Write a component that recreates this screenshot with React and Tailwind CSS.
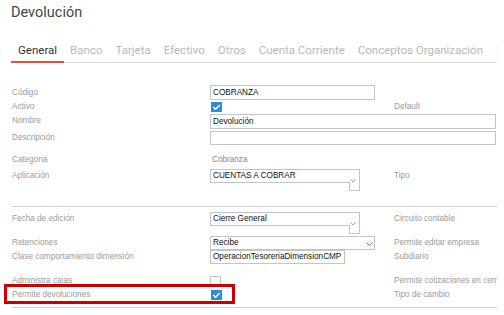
import React from "react";

const LBL = "text-[8.2px] text-[#9a9a9a] leading-[12px] whitespace-nowrap";
const TXT = "text-[8.2px] text-[#111] leading-[12px] whitespace-nowrap";

function Check({ checked }) {
  if (!checked) {
    return <div className="w-[11px] h-[11px] border border-[#c4c4c4] bg-white" />;
  }
  return (
    <svg width="11" height="10" viewBox="0 0 11 10" className="ml-[1px] block">
      <rect x="0" y="0" width="11" height="10" fill="#2b8fd6" />
      <polyline points="2.3,5 4.5,7.2 8.8,3" fill="none" stroke="#fff" strokeWidth="1.5" />
    </svg>
  );
}

function Chevron({ className, w = 6, h = 3, color = "#7fb0e0" }) {
  return (
    <svg width={w} height={h + 1} viewBox={`0 0 ${w} ${h + 1}`} className={className}>
      <polyline points={`0.5,0.5 ${w / 2},${h} ${w - 0.5},0.5`} fill="none" stroke={color} strokeWidth="1" />
    </svg>
  );
}

function OddSelect({ value }) {
  return (
    <div className="relative w-[150px] h-[22px]">
      <div className={`h-[14px] border border-[#c4c4c4] pl-[2px] flex items-center ${TXT}`}>{value}</div>
      <div className="absolute right-0 top-[13px] w-[11px] h-[9px] border-x border-b border-[#c4c4c4] bg-white" />
      <Chevron className="absolute left-[140px] top-[10px]" />
    </div>
  );
}

function Row({ label, children, right, h = "h-[14px]", items = "items-center", fieldW = "w-[184px]", lblExtra = "" }) {
  return (
    <div className={`flex ${items} ${h}`}>
      <div className={`w-[198px] shrink-0 ${LBL} ${lblExtra}`}>{label}</div>
      <div className={`${fieldW} shrink-0 flex ${items}`}>{children}</div>
      {right && <div className={`shrink-0 ${LBL} ${lblExtra}`}>{right}</div>}
    </div>
  );
}

export default function App() {
  const tabs = [
    "General",
    "Banco",
    "Tarjeta",
    "Efectivo",
    "Otros",
    "Cuenta Corriente",
    "Conceptos Organización",
    "Impuestos",
  ];
  return (
    <div className="w-[504px] h-[315px] bg-white relative font-['Liberation_Sans',Arial,sans-serif]">
      <div className="w-[497px] h-[315px] overflow-hidden">
        <div className="pl-[11px] pt-[4px] font-['Roboto',sans-serif] text-[14.5px] leading-[17px] text-[#444]">
          Devolución
        </div>

        <div className="relative ml-[11px] mt-[19px] w-[486px] h-[23px] overflow-hidden">
          <div className="absolute left-0 right-0 bottom-0 h-px bg-[#dcdcdc]" />
          <div className="relative flex font-['Roboto',sans-serif] text-[11.5px] whitespace-nowrap">
            {tabs.map((t, i) => (
              <div
                key={t}
                className={
                  i === 0
                    ? "shrink-0 h-[23px] pl-[7px] pr-[6.5px] flex items-center text-[#333] border-b-2 border-[#e8503a]"
                    : "shrink-0 h-[22px] px-[6.5px] flex items-center text-[#b8b8b8]"
                }
              >
                {t}
              </div>
            ))}
          </div>
        </div>

        <div className="pl-[12px] pt-[22px]">
          <Row label="Código" h="h-[15px]">
            <div className={`w-[165px] h-[15px] border border-[#c4c4c4] pl-[2px] flex items-center ${TXT}`}>COBRANZA</div>
          </Row>
          <Row label="Activo" right="Default">
            <Check checked />
          </Row>
          <Row label="Nombre" h="h-[16px]" items="items-start" fieldW="w-[286px]" lblExtra="pt-[1px]">
            <div className={`w-[286px] h-[15px] border border-[#c4c4c4] pl-[2px] flex items-center ${TXT}`}>Devolución</div>
          </Row>
          <Row label="Descripción" h="h-[15px]" fieldW="w-[286px]">
            <div className="w-[286px] h-[14px] border border-[#c4c4c4]" />
          </Row>

          <div className="mt-[8px]">
            <Row label="Categoria">
              <div className="pl-[2px] text-[8.2px] leading-[12px] text-[#888]">Cobranza</div>
            </Row>
          </div>
          <div className="mt-[2px]">
            <Row label="Aplicación" right="Tipo" h="h-[22px]" items="items-start" lblExtra="pt-[1px]">
              <OddSelect value="CUENTAS A COBRAR" />
            </Row>
          </div>

          <div className="mt-[15px] w-[485px] h-px bg-[#cfcfcf]" />

          <div className="mt-[5px]">
            <Row label="Fecha de edición" right="Circuito contable" h="h-[22px]" items="items-start" lblExtra="pt-[1px]">
              <OddSelect value="Cierre General" />
            </Row>
          </div>
          <div className="mt-[2px]">
            <Row label="Retenciones" right="Permite editar empresa">
              <div className={`relative w-[165px] h-[14px] border border-[#c4c4c4] pl-[2px] flex items-center ${TXT}`}>
                Recibe
                <Chevron className="absolute left-[155px] top-[5px]" w={7} h={3.5} color="#4a90d9" />
              </div>
            </Row>
          </div>
          <Row label="Clase comportamiento dimensión" right="Subdiario">
            <div className={`w-[135px] h-[14px] border border-[#c4c4c4] pl-[2px] flex items-center ${TXT}`}>
              OperacionTesoreriaDimensionCMP
            </div>
          </Row>

          <div className="mt-[11px]">
            <Row label="Administra cajas" right="Permite cotizaciones en cerrado" h="h-[12px]">
              <Check />
            </Row>
          </div>
          <div className="mt-[2px]">
            <Row label="Permite devoluciones" right="Tipo de cambio" h="h-[12px]">
              <Check checked />
            </Row>
          </div>

          <div className="mt-[6px] w-[485px] h-px bg-[#cfcfcf]" />
        </div>
      </div>

      <div className="absolute left-[4px] top-[284px] w-[231px] h-[20px] border-[3px] border-[#cc0000]" />
    </div>
  );
}
